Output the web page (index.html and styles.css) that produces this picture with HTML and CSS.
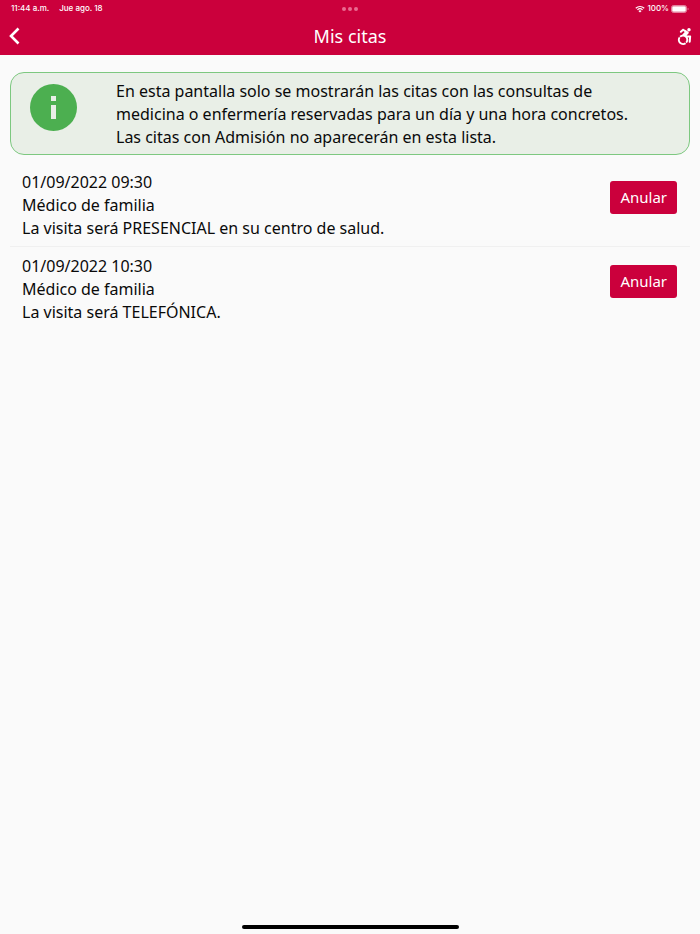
FILE: index.html
```html
<!DOCTYPE html>
<html lang="es">
<head>
  <meta charset="UTF-8">
  <meta name="viewport" content="width=device-width, initial-scale=1">
  <title>Mis citas</title>
  <link rel="stylesheet" href="styles.css">
</head>
<body>
  <header class="header">
    <!-- Barra de estado -->
    <div class="status">
      <div class="status-left">
        <span>11:44 a.m.</span>
        <span>Jue ago. 18</span>
      </div>
      <div class="dots"><i></i><i></i><i></i></div>
      <div class="status-right">
        <svg class="wifi" viewBox="0 0 20 15" aria-hidden="true">
          <path d="M1.5 6C6.4 1.2 13.6 1.2 18.5 6M4.8 9.2c3-2.8 7.4-2.8 10.4 0" fill="none" stroke="#fff" stroke-width="2.2"/>
          <path d="M10 14.5l-3.2-3.2c1.9-1.6 4.5-1.6 6.4 0z" fill="#fff"/>
        </svg>
        <span>100%</span>
        <svg class="battery" viewBox="0 0 18 8" aria-hidden="true">
          <rect x=".5" y=".5" width="15" height="7" rx="2" fill="none" stroke="#fff" stroke-opacity=".5"/>
          <rect x="1.2" y="1.2" width="13.6" height="5.6" rx="1.3" fill="#fff"/>
          <path d="M16.6 2.8q1 .3 1 1.2t-1 1.2z" fill="#fff" fill-opacity=".5"/>
        </svg>
      </div>
    </div>

    <!-- Barra de navegación -->
    <nav class="navbar">
      <a class="back" href="#" aria-label="Volver">
        <svg viewBox="0 0 12 18" aria-hidden="true">
          <path d="M10.5 1.5L3 9l7.5 7.5" fill="none" stroke="#fff" stroke-width="2.6"/>
        </svg>
      </a>
      <h1>Mis citas</h1>
      <a class="access" href="#" aria-label="Accesibilidad">
        <svg viewBox="0 0 448 512" fill="#fff" aria-hidden="true">
          <path d="M423.9 255.8L411 413.1c-3.3 40.7-63.9 35.1-60.6-4.9l10-122.5-41.1 2.3c10.1 20.7 15.8 43.9 15.8 68.5 0 41.2-16.1 78.7-42.3 106.5l-39.3-39.3c57.9-63.7 13.1-167.2-74-167.2-25.9 0-49.5 9.9-67.2 26L73 243.2c22-20.7 50.1-35.1 81.4-40.2l75.3-85.7-42.6-24.8-51.6 46c-30 26.8-70.6-18.5-40.5-45.4l68-60.7c9.8-8.8 24.1-10.2 35.5-3.6 0 0 139.3 80.9 139.5 81.1 16.2 10.1 20.7 36 6.1 52.6L285.7 229l106.1-5.9c18.5-1.1 33.6 14.4 32.1 32.7zm-64.9-154c28.1 0 50.9-22.8 50.9-50.9C409.9 22.8 387.1 0 359 0c-28.1 0-50.9 22.8-50.9 50.9 0 28.1 22.8 50.9 50.9 50.9zM179.6 456.5c-80.6 0-127.4-90.6-82.7-156.1l-39.7-39.7C36.4 287 24 320.3 24 356.4c0 130.7 150.7 201.4 251.4 122.5l-39.7-39.7c-16 10.9-35.3 17.3-56.1 17.3z"/>
        </svg>
      </a>
    </nav>
  </header>

  <main class="content">
    <div class="info">
      <svg class="info-icon" viewBox="0 0 47 47" aria-hidden="true">
        <circle cx="23.5" cy="23.5" r="23.5" fill="#4caf50"/>
        <path d="M21 12h5v5h-5zM21 21h5v14h-5z" fill="#e9efe7"/>
      </svg>
      <p>En esta pantalla solo se mostrarán las citas con las consultas de medicina o enfermería reservadas para un día y una hora concretos. Las citas con Admisión no aparecerán en esta lista.</p>
    </div>

    <!-- Lista de citas -->
    <ul class="citas">
      <li class="cita">
        <div class="cita-texto">
          <p>01/09/2022 09:30</p>
          <p>Médico de familia</p>
          <p>La visita será PRESENCIAL en su centro de salud.</p>
        </div>
        <button class="anular" type="button">Anular</button>
      </li>
      <li class="cita">
        <div class="cita-texto">
          <p>01/09/2022 10:30</p>
          <p>Médico de familia</p>
          <p>La visita será TELEFÓNICA.</p>
        </div>
        <button class="anular" type="button">Anular</button>
      </li>
    </ul>
  </main>

  <footer class="footer">
    <div class="home-bar"></div>
  </footer>
</body>
</html>
```
FILE: styles.css
```css
* {
  box-sizing: border-box;
}

body {
  display: flex;
  flex-direction: column;
  min-height: 100vh;
  margin: 0;
  font-family: "Noto Sans", sans-serif;
  font-size: 16px;
  line-height: 23px;
  color: #0a0a0a;
  background-color: #fafafa;
}

h1, p, ul {
  margin: 0;
  padding: 0;
}

svg {
  display: block;
}

/* Cabecera */
.header {
  color: #fff;
  background-color: #cb003c;
}

.status {
  display: grid;
  grid-template-columns: 1fr auto 1fr;
  align-items: center;
  height: 17px;
  padding: 0 11px;
  font-family: Inter, sans-serif;
  font-size: 8px;
  font-weight: 500;
  line-height: 17px;
}

.status-left {
  display: flex;
  gap: 10px;
}

.status-right {
  display: flex;
  align-items: center;
  justify-content: flex-end;
  gap: 2px;
}

.dots {
  display: flex;
  gap: 2px;
}

.dots i {
  width: 4px;
  height: 4px;
  border-radius: 50%;
  background-color: #ea6a91;
}

.wifi {
  width: 10px;
  height: 8px;
}

.battery {
  width: 18px;
  height: 8px;
}

.navbar {
  display: grid;
  grid-template-columns: 1fr auto 1fr;
  align-items: center;
  height: 38px;
  padding: 0 8px;
}

.navbar h1 {
  font-size: 18px;
  font-weight: 400;
  line-height: 24px;
}

.back {
  justify-self: start;
}

.back svg {
  width: 12px;
  height: 18px;
}

.access {
  justify-self: end;
}

.access svg {
  width: 15px;
  height: 17px;
}

/* Contenido */
.content {
  flex: 1;
  padding: 17px 10px 0;
}

.info {
  display: flex;
  align-items: flex-start;
  gap: 39px;
  padding: 7px 40px 5px 19px;
  border: 1px solid #7dc880;
  border-radius: 14px;
  background-color: #e9efe7;
}

.info-icon {
  flex: none;
  width: 47px;
  height: 47px;
  margin-top: 4px;
}

/* Citas */
.citas {
  padding-top: 8px;
  list-style: none;
}

.cita {
  display: flex;
  align-items: flex-start;
  justify-content: space-between;
  padding: 8px 13px 6px 12px;
}

.cita + .cita {
  border-top: 1px solid #f0f0f0;
}

.anular {
  flex: none;
  margin-top: 10px;
  padding: 5px 10px;
  border: none;
  border-radius: 3px;
  font: inherit;
  font-size: 15px;
  color: #fff;
  background-color: #cb003c;
  cursor: pointer;
}

/* Indicador inferior */
.footer {
  display: flex;
  justify-content: center;
  padding-bottom: 5px;
}

.home-bar {
  width: 31%;
  height: 4px;
  border-radius: 2px;
  background-color: #000;
}
```
